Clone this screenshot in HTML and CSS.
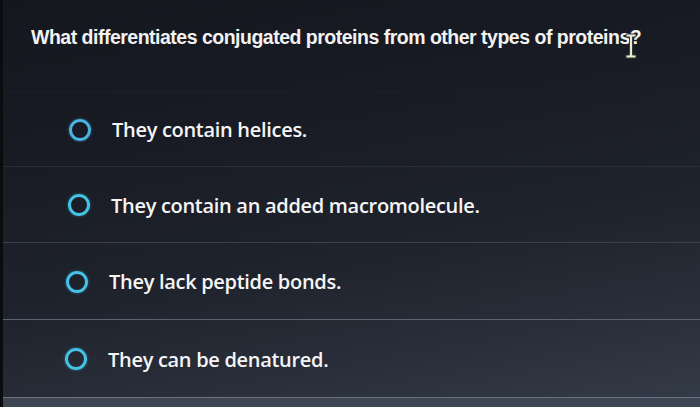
FILE: index.html
```html
<!DOCTYPE html>
<html>
<head>
<meta charset="utf-8">
<link rel="stylesheet" href="styles.css">
</head>
<body>
<div class="screen">
  <div class="question">
    <span class="qtext">What differentiates conjugated proteins from other types of proteins?</span>
    <svg class="cursor" width="14" height="28" viewBox="0 0 14 28"><path d="M2 2h10v3H8.5v18H12v3H2v-3h3.5V5H2z" fill="#e9ead8" stroke="#3a3a30" stroke-width="1"/></svg>
  </div>
  <div class="options">
    <div class="opt o1"><span class="radio"></span><span class="label">They contain helices.</span></div>
    <div class="opt o2"><span class="radio"></span><span class="label">They contain an added macromolecule.</span></div>
    <div class="opt o3"><span class="radio"></span><span class="label">They lack peptide bonds.</span></div>
    <div class="opt o4"><span class="radio"></span><span class="label">They can be denatured.</span></div>
  </div>
  <div class="bottom"></div>
</div>
</body>
</html>
```
FILE: styles.css
```css
html, body {
  margin: 0;
  padding: 0;
  width: 700px;
  height: 407px;
  overflow: hidden;
}
.screen {
  width: 700px;
  height: 407px;
  display: flex;
  flex-direction: column;
  background: linear-gradient(170deg, #15171f 0%, #181b23 30%, #1f232d 60%, #2b313d 85%, #353c49 100%);
  border-left: 3px solid #0b0c10;
  box-sizing: border-box;
  font-family: "Liberation Sans", Arial, sans-serif;
  color: #f4f4f4;
}
.question {
  position: relative;
  height: 92px;
  flex: none;
  box-sizing: border-box;
  padding: 26px 0 0 28px;
  border-bottom: 1px solid #1c1f27;
}
.qtext {
  font-weight: bold;
  font-size: 19.5px;
  letter-spacing: -0.5px;
  color: #f2f2f2;
}
.cursor {
  position: absolute;
  left: 621px;
  top: 32px;
}
.options {
  display: flex;
  flex-direction: column;
}
.opt {
  height: 76px;
  display: flex;
  align-items: center;
  box-sizing: border-box;
  border-bottom: 1px solid #3a404b;
  padding-top: 1px;
}
.o1 { border-bottom-color: #2a2e37; height: 75px; padding-left: 66px; }
.o2 { border-bottom-color: #3b404a; padding-left: 65px; }
.o3 { border-bottom-color: #5b6270; height: 77px; padding-left: 63px; }
.o4 { border-bottom-color: #6a7280; height: 78px; padding-left: 62px; }
.radio {
  width: 16px;
  height: 16px;
  border: 3px solid #45c3e6;
  border-radius: 50%;
  flex: none;
  box-shadow: 0 0 3px rgba(69, 195, 230, 0.5);
}
.o1 .radio { border-color: #4ab2e0; }
.label {
  margin-left: 21px;
  font-family: "Open Sans", sans-serif;
  font-weight: 600;
  font-size: 20px;
  letter-spacing: -0.3px;
  color: #f5f5f5;
}
.bottom {
  flex: 1;
  background: #3e4553;
}
```
